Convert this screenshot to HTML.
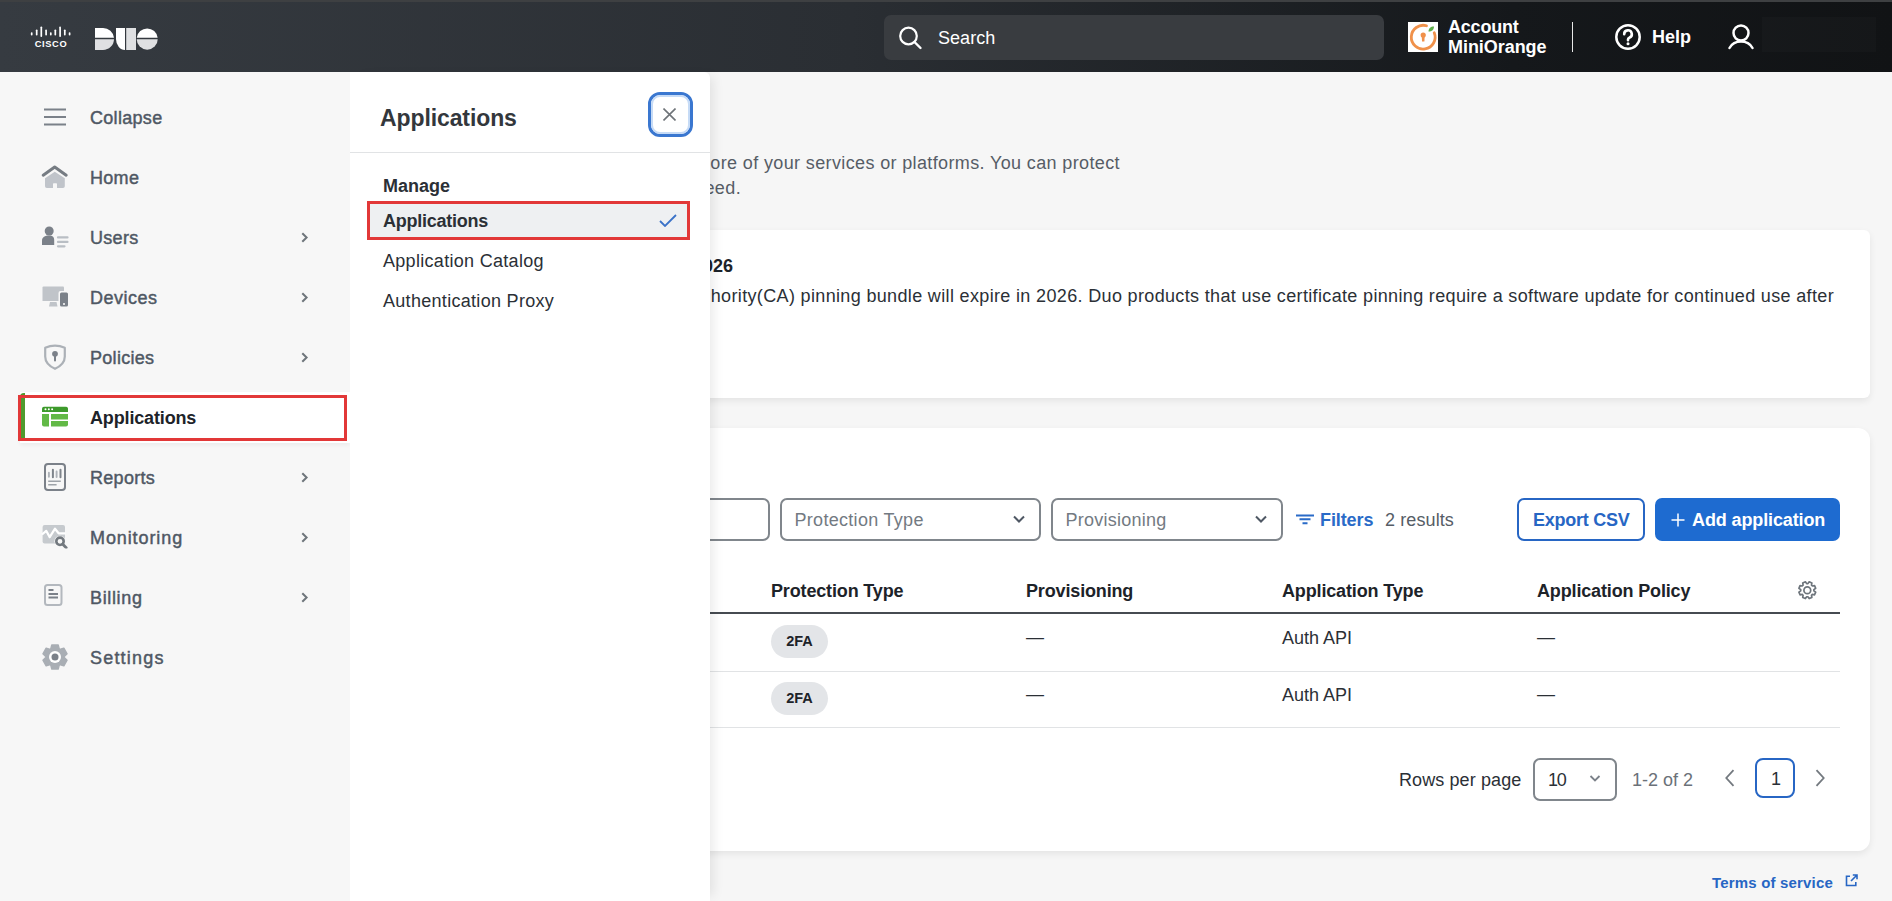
<!DOCTYPE html>
<html><head><meta charset="utf-8">
<style>
*{box-sizing:border-box;margin:0;padding:0}
html,body{width:1892px;height:901px;overflow:hidden}
body{font-family:"Liberation Sans",sans-serif;background:#f6f6f6;position:relative;color:#2b3036}
.abs{position:absolute}
#hdr{left:0;top:0;width:1892px;height:72px;background:linear-gradient(90deg,#363b41 0%,#2a2e33 45%,#15181b 80%,#111315 100%)}
#hdrline{left:0;top:0;width:1892px;height:2px;background:#3e4042}
#side{left:0;top:72px;width:350px;height:829px;background:#f7f7f7}
.nav{position:absolute;left:0;width:350px;height:44px;font-size:18px;color:#4f5864;letter-spacing:0.3px}
.nav .t{position:absolute;left:90px;top:13px;line-height:20px;-webkit-text-stroke:0.45px #4f5864}
.nav .ic{position:absolute;left:40px;top:50%;transform:translateY(-50%)}
.nav .chev{position:absolute;left:299px;top:50%;transform:translateY(-50%)}
#fly{left:350px;top:72px;width:360px;height:829px;background:#fff;border-top-right-radius:6px;box-shadow:8px 0 12px -5px rgba(0,0,0,0.09)}
.card{position:absolute;background:#fff;border-radius:10px;box-shadow:0 3px 7px rgba(0,0,0,0.075)}
.inp{border:2px solid #80868c;border-radius:7px;background:#fff}
.ph{position:absolute;top:10px;font-size:18px;color:#737a82;line-height:20px;letter-spacing:0.25px;white-space:nowrap}
.th{top:153px;font-size:18px;font-weight:bold;color:#1d2329;line-height:20px;letter-spacing:-0.15px;white-space:nowrap}
.td{font-size:18px;color:#2b3036;line-height:20px;white-space:nowrap}
.badge{width:57px;height:33px;border-radius:17px;background:#e3e5e8;font-size:14.5px;font-weight:bold;color:#1d2329;line-height:33px;text-align:center}
</style></head><body>
<div id="hdr" class="abs">
 <svg class="abs" style="left:0;top:0" width="180" height="72" viewBox="0 0 180 72">
  <g fill="#fff">
   <rect x="30.85" y="32.3" width="1.7" height="3.3" rx="0.8"/>
   <rect x="35.85" y="29.5" width="1.7" height="6.1" rx="0.8"/>
   <rect x="40.45" y="26.5" width="1.7" height="10.5" rx="0.8"/>
   <rect x="45.25" y="29.5" width="1.7" height="6.1" rx="0.8"/>
   <rect x="49.95" y="32.3" width="1.7" height="3.3" rx="0.8"/>
   <rect x="54.45" y="29.5" width="1.7" height="6.1" rx="0.8"/>
   <rect x="59.25" y="26.5" width="1.7" height="10.5" rx="0.8"/>
   <rect x="63.95" y="29.5" width="1.7" height="6.1" rx="0.8"/>
   <rect x="68.75" y="32.3" width="1.7" height="3.3" rx="0.8"/>
  </g>
  <text x="34.8" y="47.1" font-family="Liberation Sans" font-weight="bold" font-size="9.3" fill="#fff" letter-spacing="0.6">CISCO</text>
  <path d="M95 28H103A11 11 0 0 1 114 37.8H95Z" fill="#fff"/>
  <path d="M95 39.2H114A11 11 0 0 1 103 50H95Z" fill="#dfe0e2"/>
  <path d="M116 28H125V50A9 11 0 0 1 116 39Z" fill="#fff"/>
  <rect x="126.2" y="28" width="9.8" height="22" fill="#dfe0e2"/>
  <path d="M136.76 37.8A10.5 10.5 0 0 1 157.64 37.8Z" fill="#fff"/>
  <path d="M157.7 39.2A10.5 10.5 0 0 1 136.7 39.2Z" fill="#dfe0e2"/>
 </svg>
 <div class="abs" style="left:884px;top:15px;width:500px;height:45px;border-radius:7px;background:#393c40"></div>
 <svg class="abs" style="left:898px;top:26px" width="25" height="24" viewBox="0 0 25 24"><circle cx="10.5" cy="10" r="8.3" fill="none" stroke="#fff" stroke-width="2.2"/><path d="M16.5 16L22.5 22" stroke="#fff" stroke-width="2.4" stroke-linecap="round"/></svg>
 <div class="abs" style="left:938px;top:28px;font-size:18px;color:#fff;line-height:20px;letter-spacing:0.05px">Search</div>
 <div class="abs" style="left:1408px;top:22px;width:30px;height:30px;background:#fff"></div>
 <svg class="abs" style="left:1408px;top:22px" width="30" height="30" viewBox="0 0 30 30"><path d="M18.48 3.76 A11.9 11.9 0 1 0 26.23 10.74" fill="none" stroke="#f0914a" stroke-width="2.8" stroke-linecap="round"/><circle cx="15.2" cy="13" r="2.6" fill="#f0914a"/><path d="M13.7 14H16.7L16.4 19.5H14Z" fill="#f0914a"/><path d="M20.5 9.5C20.5 6.5 22.5 4.5 26 4.5C26 7.5 24 9.5 20.5 9.5Z" fill="#5fae4a"/></svg>
 <div class="abs" style="left:1448px;top:17px;font-size:18px;font-weight:bold;color:#fff;line-height:20px;letter-spacing:-0.2px">Account</div>
 <div class="abs" style="left:1448px;top:37px;font-size:18px;font-weight:bold;color:#fff;line-height:20px;letter-spacing:-0.05px">MiniOrange</div>
 <div class="abs" style="left:1571.7px;top:22px;width:1.5px;height:30px;background:#e8e8e8"></div>
 <svg class="abs" style="left:1613px;top:23px" width="30" height="30" viewBox="0 0 30 30"><circle cx="15" cy="14" r="11.7" fill="none" stroke="#fff" stroke-width="2.5"/><path d="M11.2 11.2A3.8 3.8 0 1 1 16.3 14.7C15.3 15.1 15 15.7 15 16.6V17.3" fill="none" stroke="#fff" stroke-width="2.6" stroke-linecap="round"/><circle cx="15" cy="20.8" r="1.5" fill="#fff"/></svg>
 <div class="abs" style="left:1652px;top:27px;font-size:18px;font-weight:bold;color:#fff;line-height:20px">Help</div>
 <svg class="abs" style="left:1726px;top:22px" width="30" height="30" viewBox="0 0 30 30"><circle cx="15" cy="11" r="7.5" fill="none" stroke="#fff" stroke-width="2.5"/><path d="M3.5 26C6 21.5 10 19.6 15 19.6C20 19.6 24 21.5 26.5 26" fill="none" stroke="#fff" stroke-width="2.5" stroke-linecap="round"/></svg>
 <div class="abs" style="left:1762px;top:17px;width:114px;height:35px;background:rgba(255,255,255,0.018)"></div>
</div>
<div id="hdrline" class="abs"></div>

<div id="side" class="abs">
 <div class="nav" style="top:23px"><svg class="ic" style="left:43px" width="24" height="18" viewBox="0 0 24 18"><path d="M1 1.5H23M1 9H23M1 16.5H23" stroke="#7b8189" stroke-width="2"/></svg><span class="t">Collapse</span></div>
 <div class="nav" style="top:83px"><svg class="ic" style="left:41px" width="28" height="24" viewBox="0 0 28 24"><path d="M4 13.2L13.8 6.8L23.8 13.2V21.2Q23.8 23 22 23H16V19Q16 18.3 15.3 18.3H12.7Q12 18.3 12 19V23H5.8Q4 23 4 21.2Z" fill="#c0c4ca"/><path d="M2.2 10.2L13.7 2L25.2 10.2" fill="none" stroke="#767c83" stroke-width="3" stroke-linecap="round" stroke-linejoin="round"/></svg><span class="t">Home</span></div>
 <div class="nav" style="top:143px"><svg class="ic" style="left:41px" width="30" height="22" viewBox="0 0 30 22"><circle cx="8.2" cy="5" r="4.5" fill="#7b8189"/><path d="M1 19V14.5C1 11 4 9.5 8 9.5C12 9.5 13.2 11 13.2 14.5V19Z" fill="#7b8189"/><path d="M17 11.4H26.5M17 15.9H26.5M17 20.3H23.5" stroke="#b9bec4" stroke-width="2.2" stroke-linecap="round"/></svg><span class="t">Users</span></div>
 <div class="nav" style="top:203px"><svg class="ic" style="left:42px" width="28" height="22" viewBox="0 0 28 22"><path d="M0.5 1.5Q0.5 0.5 1.5 0.5H21Q22 0.5 22 1.5V15H0.5Z" fill="#c0c4c9"/><path d="M8 16H14.5L15.5 20.5H7Z" fill="#c0c4c9"/><rect x="16.5" y="5" width="10" height="16" rx="2" fill="#f7f7f7"/><rect x="18" y="6.5" width="8" height="14" rx="1.5" fill="#7b8189"/><circle cx="22" cy="18" r="1" fill="#fff"/></svg><span class="t" style="letter-spacing:0.5px">Devices</span></div>
 <div class="nav" style="top:263px"><svg class="ic" style="left:43px" width="24" height="28" viewBox="0 0 24 28"><path d="M2.2 4.8Q12 0.4 21.8 4.8V13.5C21.8 19.5 17 23.5 12 25.8C7 23.5 2.2 19.5 2.2 13.5Z" fill="none" stroke="#acb1b7" stroke-width="2.2" stroke-linejoin="round"/><circle cx="12" cy="10.8" r="2.9" fill="#7b8189"/><rect x="11" y="11" width="2" height="7.6" rx="1" fill="#7b8189"/></svg><span class="t">Policies</span></div>
 <div class="nav" style="top:320px;left:20px;width:330px;height:51px;background:#fff;box-shadow:0 2px 4px rgba(0,0,0,0.05)"></div>
 <div class="nav" style="top:321px;left:20px;width:4.5px;height:47px;background:#4f9a2e;border-radius:4px 0 0 4px"></div>
 <div class="nav" style="top:323px;color:#1d2329"><svg class="ic" style="left:42px" width="26" height="21" viewBox="0 0 26 21"><path d="M0 2.5Q0 0 2.5 0H23.5Q26 0 26 2.5V5.5H0Z" fill="#3d9a2b"/><circle cx="3.5" cy="2.8" r="1" fill="#fff"/><circle cx="6.8" cy="2.8" r="1" fill="#fff"/><circle cx="10.1" cy="2.8" r="1" fill="#fff"/><path d="M0 7.5H7V20H2Q0 20 0 18Z" fill="#62b946"/><path d="M9 7.5H26V13H9Z" fill="#62b946"/><path d="M9 14.5H26V18Q26 20 24 20H9Z" fill="#62b946"/></svg><span class="t" style="font-weight:bold;letter-spacing:-0.15px;-webkit-text-stroke:0">Applications</span></div>
 <div class="abs" style="left:18px;top:323px;width:329px;height:46px;border:3px solid #e23838"></div>
 <div class="nav" style="top:383px"><svg class="ic" style="left:43px" width="24" height="29" viewBox="0 0 24 29"><rect x="2" y="1.5" width="20" height="26" rx="3" fill="none" stroke="#7b8189" stroke-width="2"/><path d="M5.9 14.3V10.2M13.6 14.5V9" stroke="#aeb3b9" stroke-width="1.9" stroke-linecap="round"/><path d="M9.9 14.7V7.2M17.5 14.7V7.2" stroke="#7e848b" stroke-width="2" stroke-linecap="round"/><path d="M5.2 18.7H17.8M5.2 22.3H13.6" stroke="#9ea3a9" stroke-width="1.5"/></svg><span class="t">Reports</span></div>
 <div class="nav" style="top:443px"><svg class="ic" style="left:41px;margin-top:-1px" width="28" height="25" viewBox="0 0 28 25"><rect x="1.6" y="1.5" width="22.4" height="18.6" rx="2" fill="#c6cace"/><path d="M1 11L5.2 7.3L8.7 13.6L14 5.2L17.6 9.8H24.5" fill="none" stroke="#fff" stroke-width="2.2" stroke-linejoin="round"/><circle cx="19" cy="17.8" r="5.6" fill="#f7f7f7"/><circle cx="19" cy="17.8" r="3.7" fill="none" stroke="#73797f" stroke-width="2.6"/><path d="M21.8 20.8L25.2 24.3" stroke="#73797f" stroke-width="2.8" stroke-linecap="round"/></svg><span class="t" style="letter-spacing:0.9px">Monitoring</span></div>
 <div class="nav" style="top:503px"><svg class="ic" style="left:43px;margin-top:-2.5px" width="22" height="24" viewBox="0 0 22 24"><rect x="2" y="2" width="16.5" height="20" rx="2.5" fill="none" stroke="#b3b8be" stroke-width="2"/><path d="M5.5 7H10.5M5.5 11H15M5.5 14.5H15" stroke="#7b8189" stroke-width="1.8"/></svg><span class="t" style="letter-spacing:0.65px">Billing</span></div>
 <div class="nav" style="top:563px"><svg class="ic" style="left:42px" width="26" height="28" viewBox="0 0 26 28"><circle cx="13" cy="14" r="9.4" fill="#a9aeb4"/><path d="M8.69 6.10 L9.79 1.92 L16.21 1.92 L17.31 6.10 L17.68 6.31 L21.85 5.18 L25.07 10.74 L22.00 13.79 L22.00 14.21 L25.07 17.26 L21.85 22.82 L17.68 21.69 L17.31 21.90 L16.21 26.08 L9.79 26.08 L8.69 21.90 L8.32 21.69 L4.15 22.82 L0.93 17.26 L4.00 14.21 L4.00 13.79 L0.93 10.74 L4.15 5.18 L8.32 6.31Z" fill="#a9aeb4" stroke="#a9aeb4" stroke-width="1.4" stroke-linejoin="round"/><circle cx="13" cy="14" r="6" fill="#fff"/><circle cx="13" cy="14" r="3.5" fill="#7b8189"/></svg><span class="t" style="letter-spacing:1.2px">Settings</span></div>
 <svg class="abs" style="left:300px;top:159px" width="10" height="14" viewBox="0 0 10 14"><path d="M2.3 2.2L6.6 6.5L2.3 10.8" fill="none" stroke="#6f767c" stroke-width="2"/></svg>
 <svg class="abs" style="left:300px;top:219px" width="10" height="14" viewBox="0 0 10 14"><path d="M2.3 2.2L6.6 6.5L2.3 10.8" fill="none" stroke="#6f767c" stroke-width="2"/></svg>
 <svg class="abs" style="left:300px;top:279px" width="10" height="14" viewBox="0 0 10 14"><path d="M2.3 2.2L6.6 6.5L2.3 10.8" fill="none" stroke="#6f767c" stroke-width="2"/></svg>
 <svg class="abs" style="left:300px;top:399px" width="10" height="14" viewBox="0 0 10 14"><path d="M2.3 2.2L6.6 6.5L2.3 10.8" fill="none" stroke="#6f767c" stroke-width="2"/></svg>
 <svg class="abs" style="left:300px;top:459px" width="10" height="14" viewBox="0 0 10 14"><path d="M2.3 2.2L6.6 6.5L2.3 10.8" fill="none" stroke="#6f767c" stroke-width="2"/></svg>
 <svg class="abs" style="left:300px;top:519px" width="10" height="14" viewBox="0 0 10 14"><path d="M2.3 2.2L6.6 6.5L2.3 10.8" fill="none" stroke="#6f767c" stroke-width="2"/></svg>
</div>

<!-- main content -->
<div class="abs" style="right:772px;top:151px;font-size:18px;color:#565d66;line-height:25px;letter-spacing:0.37px;white-space:nowrap;text-align:right">ore of your services or platforms. You can protect</div>
<div class="abs" style="right:1151px;top:176px;font-size:18px;color:#565d66;line-height:25px;letter-spacing:0.37px;white-space:nowrap;text-align:right">eed.</div>
<div class="card" style="left:600px;top:230px;width:1270px;height:168px;border-radius:6px">
 <div class="abs" style="right:1137px;top:26px;font-size:18px;font-weight:bold;color:#1d2329;line-height:20px;white-space:nowrap">026</div>
 <div class="abs" style="right:36px;top:56px;font-size:18px;color:#2b3036;line-height:20px;letter-spacing:0.345px;white-space:nowrap">hority(CA) pinning bundle will expire in 2026. Duo products that use certificate pinning require a software update for continued use after</div>
</div>
<div class="card" style="left:600px;top:428px;width:1270px;height:423px;border-radius:12px">
 <div class="abs inp" style="left:0;top:70px;width:170px;height:43px"></div>
 <div class="abs inp" style="left:180px;top:70px;width:261px;height:43px"><span class="ph" style="left:12.5px;letter-spacing:0.3px">Protection Type</span><svg class="abs" style="left:229.5px;top:13.5px" width="14" height="10" viewBox="0 0 14 10"><path d="M2 2.5L7 7.5L12 2.5" fill="none" stroke="#4f5864" stroke-width="2"/></svg></div>
 <div class="abs inp" style="left:451px;top:70px;width:232px;height:43px"><span class="ph" style="left:12.5px">Provisioning</span><svg class="abs" style="left:201px;top:13.5px" width="14" height="10" viewBox="0 0 14 10"><path d="M2 2.5L7 7.5L12 2.5" fill="none" stroke="#4f5864" stroke-width="2"/></svg></div>
 <svg class="abs" style="left:695px;top:86px" width="20" height="11" viewBox="0 0 20 11"><path d="M1 1.5H19M4.5 5.3H15.5M7.5 9.2H12.5" stroke="#2a6bc8" stroke-width="2"/></svg>
 <div class="abs" style="left:720px;top:82px;font-size:18px;font-weight:bold;color:#2a6bc8;line-height:20px;letter-spacing:-0.1px">Filters</div>
 <div class="abs" style="left:785px;top:82px;font-size:18px;color:#565d66;line-height:20px;letter-spacing:0.1px">2 results</div>
 <div class="abs" style="left:917px;top:70px;width:128px;height:43px;border:2px solid #2766c4;border-radius:7px"></div>
 <div class="abs" style="left:933px;top:82px;font-size:18px;font-weight:bold;color:#2766c4;line-height:20px;letter-spacing:-0.25px">Export CSV</div>
 <div class="abs" style="left:1055px;top:70px;width:185px;height:43px;background:#1e6bd0;border-radius:7px"></div>
 <svg class="abs" style="left:1071px;top:85px" width="14" height="14" viewBox="0 0 14 14"><path d="M7 0.5V13.5M0.5 7H13.5" stroke="#fff" stroke-width="1.5"/></svg>
 <div class="abs" style="left:1092px;top:82px;font-size:18px;font-weight:bold;color:#fff;line-height:20px;letter-spacing:-0.12px">Add application</div>

 <div class="abs th" style="left:171px">Protection Type</div>
 <div class="abs th" style="left:426px">Provisioning</div>
 <div class="abs th" style="left:682px">Application Type</div>
 <div class="abs th" style="left:937px">Application Policy</div>
 <svg class="abs" style="left:1196px;top:152px" width="22" height="22" viewBox="0 0 22 22"><path d="M17.87 10.81 L19.69 12.10 L18.57 14.79 L16.38 14.41 L15.51 15.28 L15.89 17.47 L13.20 18.59 L11.91 16.77 L10.69 16.77 L9.40 18.59 L6.71 17.47 L7.09 15.28 L6.22 14.41 L4.03 14.79 L2.91 12.10 L4.73 10.81 L4.73 9.59 L2.91 8.30 L4.03 5.61 L6.22 5.99 L7.09 5.12 L6.71 2.93 L9.40 1.81 L10.69 3.63 L11.91 3.63 L13.20 1.81 L15.89 2.93 L15.51 5.12 L16.38 5.99 L18.57 5.61 L19.69 8.30 L17.87 9.59Z" fill="none" stroke="#6e757c" stroke-width="1.7" stroke-linejoin="round"/><circle cx="11.3" cy="10.2" r="3.4" fill="none" stroke="#6e757c" stroke-width="1.7"/></svg>
 <div class="abs" style="left:0;top:184px;width:1240px;height:2px;background:#464b51"></div>
 <div class="abs badge" style="left:171px;top:197px">2FA</div>
 <div class="abs td" style="left:426px;top:199px">&mdash;</div>
 <div class="abs td" style="left:682px;top:200px">Auth API</div>
 <div class="abs td" style="left:937px;top:199px">&mdash;</div>
 <div class="abs" style="left:0;top:243px;width:1240px;height:1px;background:#e1e3e5"></div>
 <div class="abs badge" style="left:171px;top:254px">2FA</div>
 <div class="abs td" style="left:426px;top:256px">&mdash;</div>
 <div class="abs td" style="left:682px;top:257px">Auth API</div>
 <div class="abs td" style="left:937px;top:256px">&mdash;</div>
 <div class="abs" style="left:0;top:299px;width:1240px;height:1px;background:#e1e3e5"></div>

 <div class="abs td" style="left:799px;top:342px;letter-spacing:0.1px">Rows per page</div>
 <div class="abs inp" style="left:933px;top:330px;width:84px;height:43px"><span class="ph" style="left:13px;color:#2b3036;letter-spacing:-1.3px">10</span><svg class="abs" style="left:54px;top:14px" width="12" height="9" viewBox="0 0 12 9"><path d="M1.5 2L6 6.5L10.5 2" fill="none" stroke="#7b8189" stroke-width="1.8"/></svg></div>
 <div class="abs td" style="left:1032px;top:342px;color:#6b7178">1-2 of 2</div>
 <svg class="abs" style="left:1123px;top:341px" width="14" height="18" viewBox="0 0 14 18"><path d="M10.5 1.2L3.3 9L10.5 16.8" fill="none" stroke="#73797f" stroke-width="1.8"/></svg>
 <div class="abs" style="left:1155px;top:330px;width:40px;height:40px;border:2px solid #2766c4;border-radius:8px"></div>
 <div class="abs td" style="left:1171px;top:341px">1</div>
 <svg class="abs" style="left:1213px;top:341px" width="14" height="18" viewBox="0 0 14 18"><path d="M3.5 1.2L10.7 9L3.5 16.8" fill="none" stroke="#73797f" stroke-width="1.8"/></svg>
</div>
<div class="abs" style="left:1712px;top:874px;font-size:15px;font-weight:bold;color:#2766c4;line-height:18px;letter-spacing:0.18px">Terms of service</div>
<svg class="abs" style="left:1845px;top:874px" width="13" height="13" viewBox="0 0 13 13"><path d="M5 2.2H1.5V11.5H10.8V8" fill="none" stroke="#2766c4" stroke-width="1.6"/><path d="M6 7L11.5 1.5M7.8 1H12V5.2" fill="none" stroke="#2766c4" stroke-width="1.6"/></svg>

<div id="fly" class="abs">
 <div class="abs" style="left:30px;top:32.5px;font-size:23px;font-weight:bold;color:#33373c;line-height:26px;letter-spacing:-0.1px">Applications</div>
 <div class="abs" style="left:298px;top:20px;width:45px;height:45px;border-radius:12px;border:3.2px solid #3a77d0;background:#fff"><div class="abs" style="left:0;top:0;right:0;bottom:0;border-radius:9px;border:2px solid #c6dbf6"></div>
  <svg class="abs" style="left:12px;top:12.5px" width="13" height="13" viewBox="0 0 13 13"><path d="M0.5 0.5L12.5 12.5M12.5 0.5L0.5 12.5" stroke="#6e7378" stroke-width="1.6"/></svg></div>
 <div class="abs" style="left:0;top:80px;width:360px;height:1px;background:#e1e3e5"></div>
 <div class="abs" style="left:33px;top:104px;font-size:18px;font-weight:bold;color:#2b3036;line-height:20px">Manage</div>
 <div class="abs" style="left:17px;top:129px;width:323px;height:39px;background:#eef0f2;border:3px solid #e23838"></div>
 <div class="abs" style="left:33px;top:139px;font-size:18px;font-weight:bold;color:#2b3036;line-height:20px;letter-spacing:-0.25px">Applications</div>
 <svg class="abs" style="left:309px;top:142px" width="18" height="13" viewBox="0 0 18 13"><path d="M1 7L6 12L17 1" fill="none" stroke="#3a72c8" stroke-width="1.8"/></svg>
 <div class="abs" style="left:33px;top:179px;font-size:18px;color:#2b3036;line-height:20px;letter-spacing:0.3px">Application Catalog</div>
 <div class="abs" style="left:33px;top:219px;font-size:18px;color:#2b3036;line-height:20px;letter-spacing:0.3px">Authentication Proxy</div>
</div>

</body></html>
